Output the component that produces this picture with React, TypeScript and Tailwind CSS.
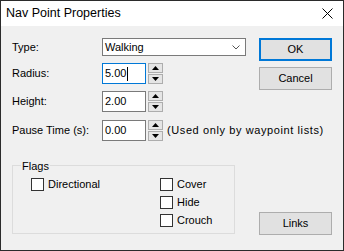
import React from "react";

const Spin = () => (
  <div className="ml-[2px] flex h-[21px] w-[15px] flex-col justify-between">
    <div className="flex h-[10px] items-center justify-center border border-[#adadad] bg-[#e5e5e5]">
      <svg width="7" height="4" viewBox="0 0 7 4">
        <path d="M3.5 0 L7 4 L0 4 Z" fill="#000" />
      </svg>
    </div>
    <div className="flex h-[10px] items-center justify-center border border-[#adadad] bg-[#e5e5e5]">
      <svg width="7" height="4" viewBox="0 0 7 4">
        <path d="M0 0 L7 0 L3.5 4 Z" fill="#000" />
      </svg>
    </div>
  </div>
);

const Field = ({ label, value, focus }: { label: string; value: string; focus?: boolean }) => (
  <div className="flex h-[21px] items-center">
    <div className="w-[90px]">{label}</div>
    <div
      className={
        focus
          ? "flex h-[21px] w-[44px] items-center border border-[#0078d7] bg-white pl-[2px]"
          : "flex h-[21px] w-[44px] items-center border border-[#7a7a7a] bg-white pl-[2px]"
      }
    >
      {value}
      {focus && <span className="ml-[1px] h-[14px] w-[1px] bg-black" />}
    </div>
    <Spin />
  </div>
);

const Check = ({ label }: { label: string }) => (
  <div className="flex h-[13px] items-center">
    <div className="h-[13px] w-[13px] border border-[#333] bg-white" />
    <span className="ml-[4px]">{label}</span>
  </div>
);

export default function App() {
  return (
    <div
      className="flex h-[251px] w-[344px] flex-col border border-[#2b2b2b] bg-[#f0f0f0] text-[11px] text-black"
      style={{ fontFamily: '"Liberation Sans", Tahoma, sans-serif' }}
    >
      {/* title bar */}
      <div className="flex h-[25px] shrink-0 items-center justify-between bg-white pl-[5px] pr-[10px] text-[12.5px]">
        <span>Nav Point Properties</span>
        <svg width="11" height="11" viewBox="0 0 11 11">
          <path d="M0.5 0.5 L10.5 10.5 M10.5 0.5 L0.5 10.5" stroke="#000" strokeWidth="1" />
        </svg>
      </div>

      <div className="flex flex-1 pl-[11px] pt-[12px]">
        {/* left */}
        <div className="flex w-[235px] flex-col">
          <div className="flex h-[18px] items-center">
            <div className="w-[90px]">Type:</div>
            <div className="flex h-[18px] w-[144px] items-center justify-between border border-[#7a7a7a] bg-white pl-[2px] pr-[5px]">
              <span>Walking</span>
              <svg width="8" height="5" viewBox="0 0 8 5">
                <path d="M0.5 0.5 L4 4 L7.5 0.5" stroke="#555" fill="none" />
              </svg>
            </div>
          </div>
          <div className="mt-[7px] flex flex-col gap-[7px]">
            <Field label="Radius:" value="5.00" focus />
            <Field label="Height:" value="2.00" />
            <div className="mt-[1px] flex items-center">
              <Field label="Pause Time (s):" value="0.00" />
              <span className="ml-[4px] whitespace-nowrap tracking-[0.6px]">(Used only by waypoint lists)</span>
            </div>
          </div>

          {/* flags group */}
          <div className="relative mt-[24px] h-[69px] w-[223px] border border-[#dcdcdc]">
            <span className="absolute left-[8px] top-[-8px] bg-[#f0f0f0] px-[1px]">Flags</span>
            <div className="flex pl-[18px] pt-[12px]">
              <div className="w-[129px]">
                <Check label="Directional" />
              </div>
              <div className="flex flex-col gap-[5px]">
                <Check label="Cover" />
                <Check label="Hide" />
                <Check label="Crouch" />
              </div>
            </div>
          </div>
        </div>

        {/* right buttons */}
        <div className="ml-[12px] flex flex-col pb-[15px]">
          <div className="flex h-[23px] w-[73px] items-center justify-center border-2 border-[#0078d7] bg-[#e1e1e1]">
            OK
          </div>
          <div className="mt-[6px] flex h-[23px] w-[73px] items-center justify-center border border-[#adadad] bg-[#e1e1e1]">
            Cancel
          </div>
          <div className="mt-auto flex h-[23px] w-[73px] items-center justify-center border border-[#adadad] bg-[#e1e1e1]">
            Links
          </div>
        </div>
      </div>
    </div>
  );
}
